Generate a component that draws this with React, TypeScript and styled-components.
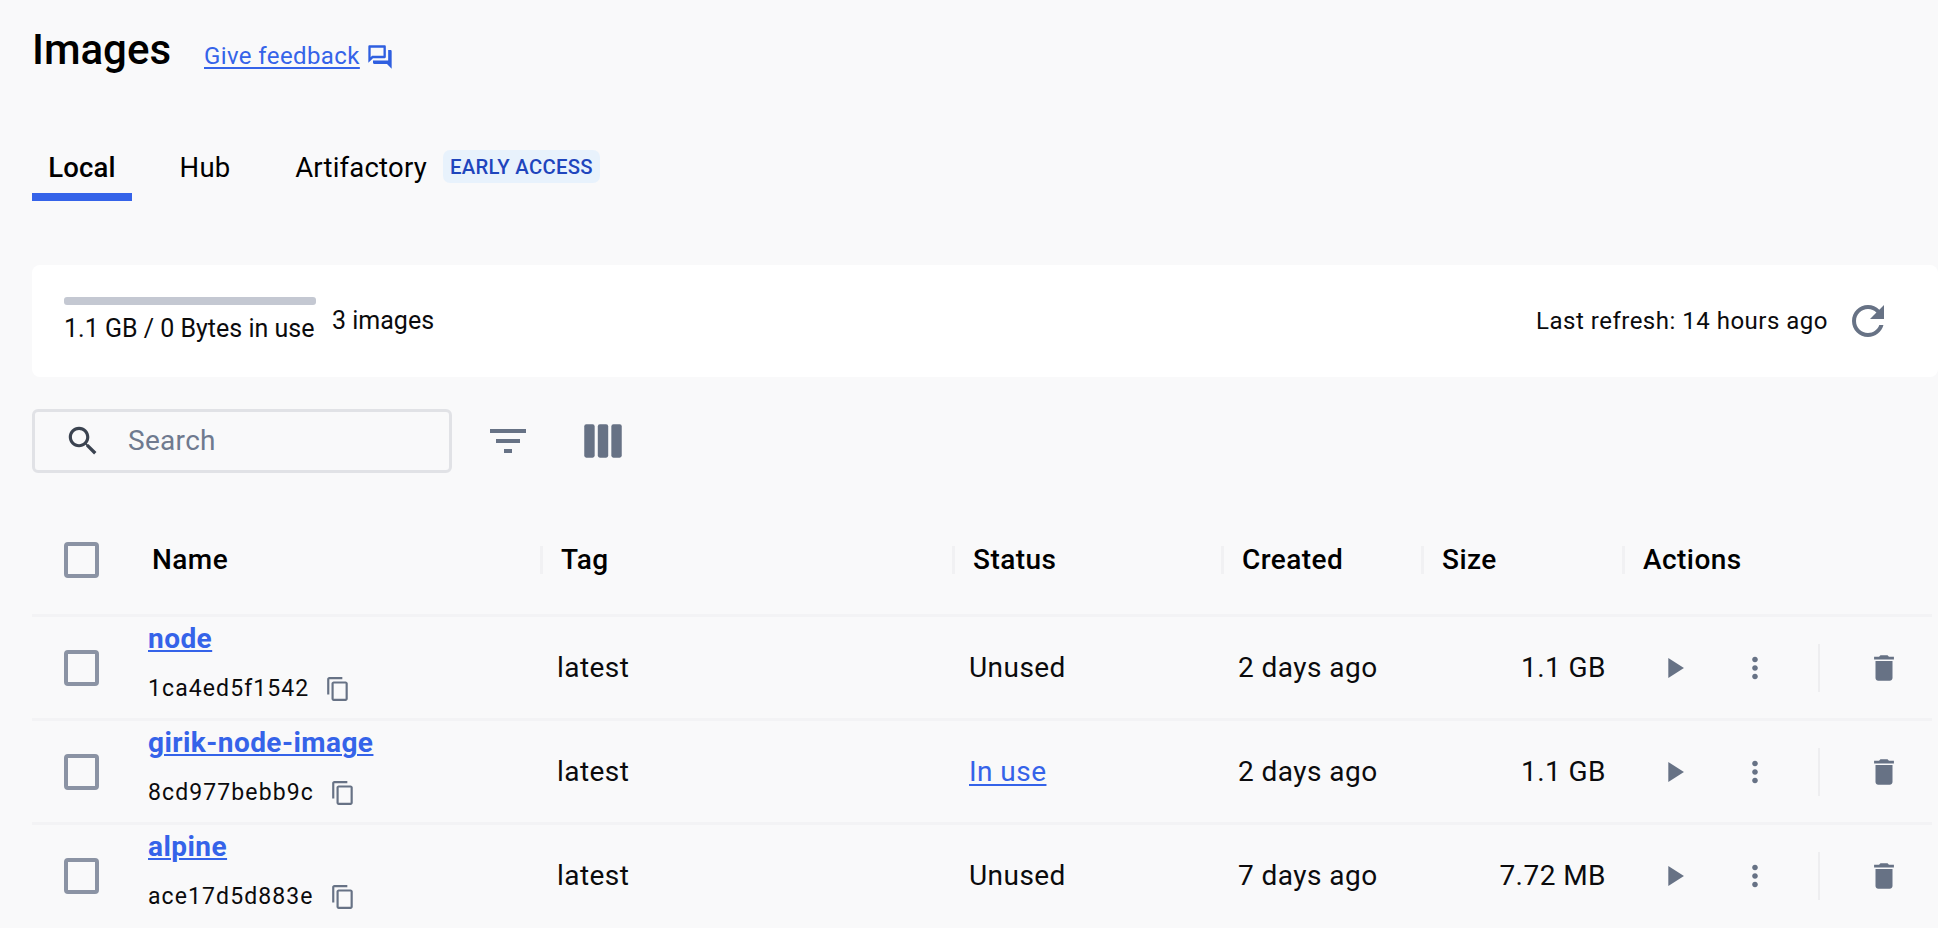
import React from "react";
import styled, { createGlobalStyle } from "styled-components";

const Global = createGlobalStyle`
  * { box-sizing: border-box; }
  html, body { margin: 0; padding: 0; height: 100%; overflow: hidden; background: #f9f9fa; }
  body { font-family: Roboto, "Liberation Sans", sans-serif; color: #0b0b0d; }
`;

const Page = styled.div`
  width: 1938px;
  height: 928px;
  padding: 24px 0 0 32px;
  overflow: hidden;
`;
const TitleRow = styled.div`
  display: flex;
  align-items: center;
  height: 52px;
`;
const Title = styled.h1`
  margin: 0;
  font-size: 42px;
  font-weight: 500;
  line-height: 52px;
  color: #000;
  width: 172px;
`;
const Feedback = styled.a`
  font-size: 24px;
  letter-spacing: 0.4px;
  color: #3563e9;
  text-decoration: underline;
  text-underline-offset: 3px;
  margin-top: 12px;
`;
const ForumIcon = styled.svg`
  width: 28px;
  height: 28px;
  fill: #2f5fe0;
  margin: 13px 0 0 6px;
`;
const Tabs = styled.div`
  display: flex;
  align-items: flex-start;
  margin-top: 64px;
  height: 61px;
`;
const Tab = styled.div<{ $active?: boolean; $w: number }>`
  width: ${(p) => p.$w}px;
  height: 61px;
  padding-top: 11px;
  text-align: center;
  font-size: 27.5px;
  letter-spacing: 0.2px;
  line-height: 34px;
  font-weight: ${(p) => (p.$active ? 500 : 400)};
  color: #000;
  border-bottom: 8px solid ${(p) => (p.$active ? "#3563e9" : "transparent")};
`;
const Badge = styled.span`
  display: inline-flex;
  align-items: center;
  height: 33px;
  padding: 0 7px;
  margin: 10px 0 0 -1px;
  border-radius: 7px;
  background: #e8f2fc;
  color: #1f45bd;
  font-size: 20.3px;
  font-weight: 500;
  letter-spacing: 0.3px;
`;
const Card = styled.div`
  margin-top: 64px;
  height: 112px;
  background: #fff;
  border-radius: 8px;
  display: flex;
  align-items: flex-start;
  padding: 0 32px;
`;
const Usage = styled.div`
  margin-top: 32px;
  width: 253px;
`;
const Bar = styled.div`
  height: 8px;
  width: 252px;
  border-radius: 3px;
  background: #c4c8d2;
`;
const UsageText = styled.div`
  margin-top: 9px;
  font-size: 25px;
  line-height: 30px;
  white-space: nowrap;
`;
const Count = styled.div`
  margin: 41px 0 0 15px;
  font-size: 25px;
  line-height: 30px;
`;
const Spacer = styled.div`
  flex: 1;
`;
const Refresh = styled.div`
  display: flex;
  align-items: center;
  margin: 32px 14px 0 0;
  height: 48px;
  font-size: 24px;
  letter-spacing: 0.5px;
  gap: 16px;
`;
const RefreshIcon = styled.svg`
  width: 48px;
  height: 48px;
  fill: #677285;
`;
const Toolbar = styled.div`
  display: flex;
  align-items: center;
  margin-top: 31px;
  height: 65px;
`;
const Search = styled.div`
  width: 420px;
  height: 64px;
  border: 3px solid #e1e2e6;
  border-radius: 6px;
  display: flex;
  align-items: center;
  padding-left: 29px;
  gap: 26px;
`;
const SearchIcon = styled.svg`
  width: 38px;
  height: 38px;
  fill: #3b4350;
  flex: none;
`;
const Placeholder = styled.span`
  font-size: 28px;
  color: #6f7a8f;
  letter-spacing: 0.3px;
`;
const ToolIcon = styled.svg<{ $ml: number; $size: number }>`
  width: ${(p) => p.$size}px;
  height: ${(p) => p.$size}px;
  fill: #677285;
  margin-left: ${(p) => p.$ml}px;
`;
const COLS = "116px 393px 412px 269px 200px 201px 309px";
const HeadRow = styled.div`
  display: grid;
  grid-template-columns: ${COLS};
  width: 1900px;
  height: 113px;
  margin-top: 31px;
  padding-top: 2px;
  align-items: center;
  border-bottom: 3px solid #f3f3f5;
`;
const HeadCell = styled.div<{ $sep?: boolean }>`
  position: relative;
  font-size: 28px;
  font-weight: 500;
  letter-spacing: 0.45px;
  color: #000;
  padding-left: ${(p) => (p.$sep ? 20 : 4)}px;
  line-height: 28px;
  ${(p) =>
    p.$sep
      ? `&::before { content: ""; position: absolute; left: -1px; top: 0; width: 3px; height: 28px; background: #f1f1f3; }`
      : ""}
`;
const Row = styled.div`
  display: grid;
  grid-template-columns: ${COLS};
  width: 1900px;
  height: 104px;
  align-items: center;
  border-bottom: 3px solid #f3f3f5;
  &:last-child {
    border-bottom-color: transparent;
  }
`;
const CheckCell = styled.div`
  padding-left: 32px;
  display: flex;
`;
const Check = styled.div`
  width: 35px;
  height: 36px;
  border: 4px solid #8b93a4;
  border-radius: 4px;
`;
const NameCell = styled.div`
  display: flex;
  flex-direction: column;
  padding-bottom: 10px;
`;
const NameLink = styled.a`
  font-size: 28px;
  font-weight: 700;
  line-height: 32px;
  letter-spacing: 0.45px;
  color: #3563e9;
  text-decoration: underline;
  text-underline-offset: 2px;
  text-decoration-thickness: 2px;
`;
const IdRow = styled.div`
  display: flex;
  align-items: center;
  margin-top: 20px;
  font-size: 23px;
  line-height: 28px;
  letter-spacing: 1.1px;
  gap: 16px;
`;
const CopyIcon = styled.svg`
  width: 26px;
  height: 26px;
  fill: #677285;
`;
const Cell = styled.div<{ $right?: boolean }>`
  font-size: 28px;
  letter-spacing: 0.45px;
  color: #0b0b0d;
  padding-left: ${(p) => (p.$right ? 0 : 16)}px;
  padding-right: ${(p) => (p.$right ? 17 : 0)}px;
  text-align: ${(p) => (p.$right ? "right" : "left")};
`;
const StatusLink = styled.a`
  color: #3563e9;
  text-decoration: underline;
  text-underline-offset: 3px;
`;
const Actions = styled.div`
  display: flex;
  align-items: center;
`;
const ActionIcon = styled.svg<{ $ml: number }>`
  width: 34px;
  height: 34px;
  fill: #677285;
  flex: none;
  margin-left: ${(p) => p.$ml}px;
`;
const Divider = styled.div`
  width: 2px;
  height: 48px;
  background: #eeeef0;
  margin-left: 46px;
`;

const P = {
  forum:
    "M15 4v7H5.17L4 12.17V4h11m1-2H3c-.55 0-1 .45-1 1v14l4-4h10c.55 0 1-.45 1-1V3c0-.55-.45-1-1-1zm5 4h-2v9H6v2c0 .55.45 1 1 1h11l4 4V7c0-.55-.45-1-1-1z",
  refresh:
    "M17.65 6.35C16.2 4.9 14.21 4 12 4c-4.42 0-7.99 3.58-7.99 8s3.57 8 7.99 8c3.73 0 6.84-2.55 7.73-6h-2.08c-.82 2.33-3.04 4-5.65 4-3.31 0-6-2.69-6-6s2.69-6 6-6c1.66 0 3.14.69 4.22 1.78L13 11h7V4l-2.35 2.35z",
  search:
    "M15.5 14h-.79l-.28-.27C15.41 12.59 16 11.11 16 9.5 16 5.91 13.09 3 9.5 3S3 5.91 3 9.5 5.91 16 9.5 16c1.61 0 3.09-.59 4.23-1.57l.27.28v.79l5 4.99L20.49 19l-4.99-5zm-6 0C7.01 14 5 11.99 5 9.5S7.01 5 9.5 5 14 7.01 14 9.5 11.99 14 9.5 14z",
  filter: "M10 18h4v-2h-4v2zM3 6v2h18V6H3zm3 7h12v-2H6v2z",
  copy:
    "M16 1H4c-1.1 0-2 .9-2 2v14h2V3h12V1zm3 4H8c-1.1 0-2 .9-2 2v14c0 1.1.9 2 2 2h11c1.1 0 2-.9 2-2V7c0-1.1-.9-2-2-2zm0 16H8V7h11v14z",
  play: "M8 5v14l11-7z",
  more:
    "M12 8c1.1 0 2-.9 2-2s-.9-2-2-2-2 .9-2 2 .9 2 2 2zm0 2c-1.1 0-2 .9-2 2s.9 2 2 2 2-.9 2-2-.9-2-2-2zm0 6c-1.1 0-2 .9-2 2s.9 2 2 2 2-.9 2-2-.9-2-2-2z",
  del: "M6 19c0 1.1.9 2 2 2h8c1.1 0 2-.9 2-2V7H6v12zM19 4h-3.5l-1-1h-5l-1 1H5v2h14V4z",
};

const rows = [
  { name: "node", id: "1ca4ed5f1542", status: "Unused", created: "2 days ago", size: "1.1 GB" },
  { name: "girik-node-image", id: "8cd977bebb9c", status: "In use", created: "2 days ago", size: "1.1 GB" },
  { name: "alpine", id: "ace17d5d883e", status: "Unused", created: "7 days ago", size: "7.72 MB" },
];

export default function App() {
  return (
    <Page>
      <Global />
      <TitleRow>
        <Title>Images</Title>
        <Feedback>Give feedback</Feedback>
        <ForumIcon viewBox="0 0 24 24"><path d={P.forum} /></ForumIcon>
      </TitleRow>
      <Tabs>
        <Tab $active $w={100}>Local</Tab>
        <Tab $w={146}>Hub</Tab>
        <Tab $w={166}>Artifactory</Tab>
        <Badge>EARLY ACCESS</Badge>
      </Tabs>
      <Card>
        <Usage>
          <Bar />
          <UsageText>1.1 GB / 0 Bytes in use</UsageText>
        </Usage>
        <Count>3 images</Count>
        <Spacer />
        <Refresh>
          Last refresh: 14 hours ago
          <RefreshIcon viewBox="0 0 24 24"><path d={P.refresh} /></RefreshIcon>
        </Refresh>
      </Card>
      <Toolbar>
        <Search>
          <SearchIcon viewBox="0 0 24 24"><path d={P.search} /></SearchIcon>
          <Placeholder>Search</Placeholder>
        </Search>
        <ToolIcon $size={48} $ml={32} viewBox="0 0 24 24"><path d={P.filter} /></ToolIcon>
        <ToolIcon $size={50} $ml={46} viewBox="0 0 24 24">
          <rect x="3" y="4" width="5" height="16" rx="1" />
          <rect x="9.5" y="4" width="5" height="16" rx="1" />
          <rect x="16" y="4" width="5" height="16" rx="1" />
        </ToolIcon>
      </Toolbar>
      <HeadRow>
        <CheckCell><Check /></CheckCell>
        <HeadCell>Name</HeadCell>
        <HeadCell $sep>Tag</HeadCell>
        <HeadCell $sep>Status</HeadCell>
        <HeadCell $sep>Created</HeadCell>
        <HeadCell $sep>Size</HeadCell>
        <HeadCell $sep>Actions</HeadCell>
      </HeadRow>
      {rows.map((r) => (
        <Row key={r.name}>
          <CheckCell><Check /></CheckCell>
          <NameCell>
            <NameLink>{r.name}</NameLink>
            <IdRow>
              {r.id}
              <CopyIcon viewBox="0 0 24 24"><path d={P.copy} /></CopyIcon>
            </IdRow>
          </NameCell>
          <Cell>latest</Cell>
          <Cell>{r.status === "In use" ? <StatusLink>In use</StatusLink> : r.status}</Cell>
          <Cell>{r.created}</Cell>
          <Cell $right>{r.size}</Cell>
          <Actions>
            <ActionIcon $ml={34} viewBox="0 0 24 24"><path d={P.play} /></ActionIcon>
            <ActionIcon $ml={47} viewBox="0 0 24 24"><path d={P.more} /></ActionIcon>
            <Divider />
            <ActionIcon $ml={47} viewBox="0 0 24 24"><path d={P.del} /></ActionIcon>
          </Actions>
        </Row>
      ))}
    </Page>
  );
}
